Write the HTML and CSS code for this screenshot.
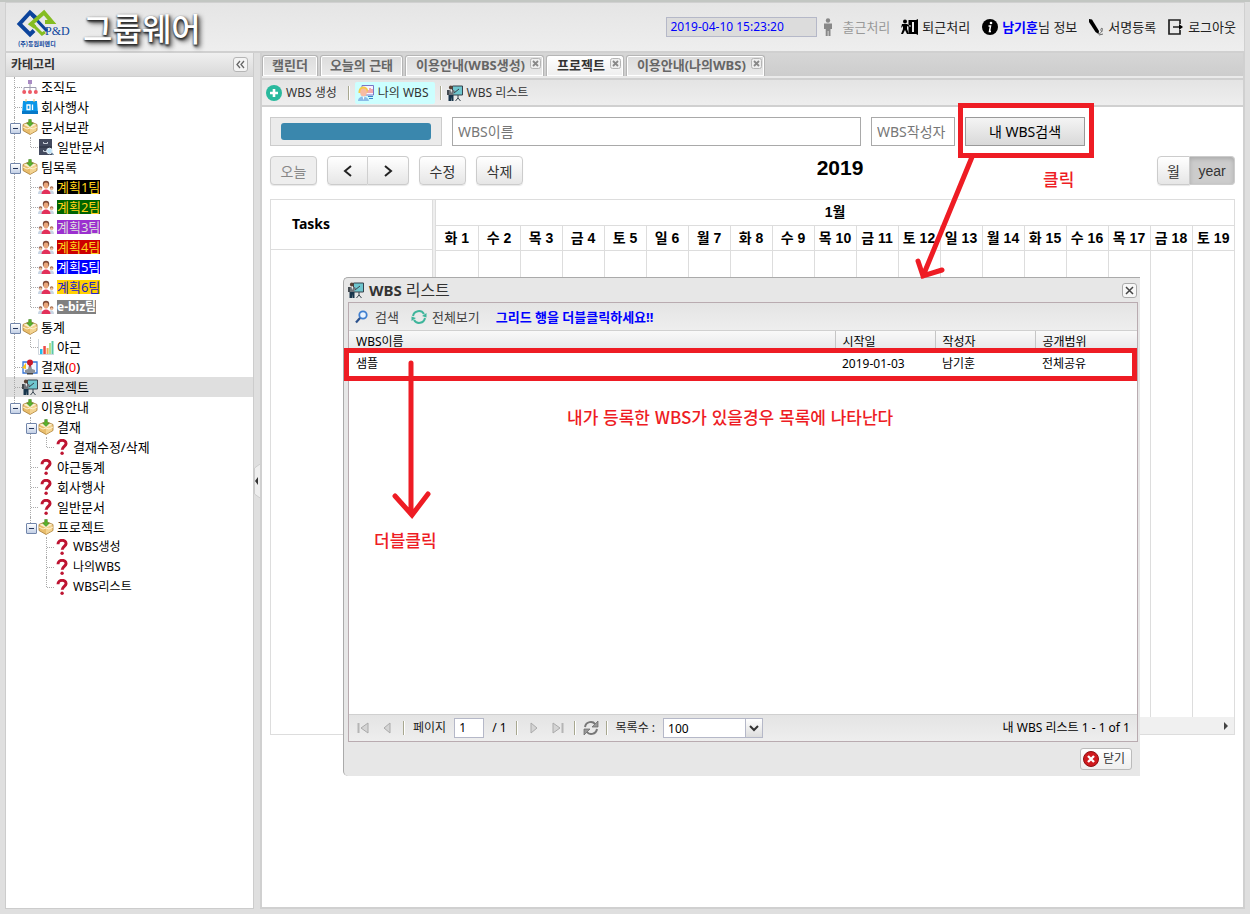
FILE: index.html
```html
<!DOCTYPE html>
<html lang="ko">
<head>
<meta charset="utf-8">
<title>그룹웨어</title>
<link rel="stylesheet" href="styles.css">
</head>
<body>
<svg class="defs" aria-hidden="true">
  <symbol id="box" viewBox="0 0 16 16"><path d="M1 5.500l7-3 7 3V11.500L8 15.500l-7-4z" fill="#e9bd6c" stroke="#a87c34" stroke-width=".8"/><path d="M1.500 5.700L8 9l6.500-3.300L8 3z" fill="#fbeecb"/><path d="M8 9v6l6.300-3.600V6z" fill="#f3d391"/><path d="M1 8l4 2 3-1 3 1 4-2" stroke="#fff3cf" fill="none"/><path d="M8 7.500L4.500 4H6.700V.5h2.600V4h2.200z" fill="#58b32c" stroke="#3a7d1a" stroke-width=".5"/></symbol>
  <symbol id="people" viewBox="0 0 16 16"><circle cx="2.500" cy="9" r="1.800" fill="#8a5a4d"/><circle cx="2.500" cy="9.800" r="1.300" fill="#f2c19c"/><circle cx="13.600" cy="9" r="1.800" fill="#a46a4a"/><circle cx="13.600" cy="9.800" r="1.300" fill="#f2c19c"/><path d="M0 15c0-5 5-5 5.500 0zM10.500 15c0-5 5.500-5 5.500 0z" fill="#c9d6e4"/><path d="M3.500 15c0-6 9-6 9 0z" fill="#e2315a"/><circle cx="8" cy="5" r="3.200" fill="#7d4a37"/><ellipse cx="8" cy="6.500" rx="2.400" ry="3.100" fill="#e9a77c"/></symbol>
  <symbol id="ques" viewBox="0 0 16 16"><path d="M4 5.200C4 0 12.300 .2 12 4.800c-.2 2.500-3.800 2.700-3.800 6" fill="none" stroke="#be1431" stroke-width="3"/><circle cx="8.100" cy="14.200" r="1.700" fill="#be1431"/></symbol>
  <symbol id="org" viewBox="0 0 16 16"><path d="M8 3v9M2 12V8.500h12V12" fill="none" stroke="#9d9bb0"/><path d="M6 1h4v4H6z" fill="#a98bc4"/><circle cx="2.200" cy="13" r="2" fill="#ee5b67"/><circle cx="8" cy="13" r="2" fill="#ee5b67"/><circle cx="13.800" cy="13" r="2" fill="#ee5b67"/></symbol>
  <symbol id="day" viewBox="0 0 16 16"><path d="M1 2h14l1 13H0z" fill="#0a96e8"/><path d="M0 12h16v3H0z" fill="#0779c8"/><path d="M4 0v3M12 0v3" stroke="#e8c36b"/><path d="M5 6h3v4.500H5zM10.500 5.500v5.500" fill="none" stroke="#fff" stroke-width="1.300"/></symbol>
  <symbol id="cabinet" viewBox="0 0 16 16"><path d="M1 0h13v16H1z" fill="#434a5e"/><path d="M1 8h13" stroke="#262c3d"/><path d="M5.500 3v1.500h4V3M5.500 11v1.500h4V11" stroke="#c8ced8" fill="none"/><circle cx="11.500" cy="12" r="2.800" fill="#bfe2f7" stroke="#e8f2f8"/><path d="M13.500 14l2 2" stroke="#6b86a0" stroke-width="1.500"/></symbol>
  <symbol id="chart" viewBox="0 0 16 16"><path d="M.5 0v15.500H16" fill="none" stroke="#cfd5dc"/><path d="M2 10h2.500v5H2z" fill="#20bdec"/><path d="M5.300 7h2.500v8H5.300z" fill="#ed4a45"/><path d="M8.600 9h2v6h-2z" fill="#efad55"/><path d="M11 4h2v11h-2z" fill="#b7df8b"/><path d="M13.500 2H15.500v13h-2z" fill="#5bc8a8"/></symbol>
  <symbol id="stamp" viewBox="0 0 16 16"><path d="M1 3h14v11H1z" fill="#f3f7ff" stroke="#3674d6" stroke-width="1.300"/><path d="M0 9l4-5v6z" fill="#fbc31c"/><path d="M7 6h2l1 4 3 1v3H3v-3l3-1z" fill="#8d9299"/><circle cx="8" cy="3.500" r="3" fill="#c91a2b"/><path d="M7 6h2l-1 3z" fill="#c91a2b"/><path d="M5 14h6v1.500H5z" fill="#444"/></symbol>
  <symbol id="board" viewBox="0 0 16 16"><path d="M5.500 1h10v9h-10z" fill="#6fc6ce" stroke="#35424c"/><path d="M7 8l5-4M11 10v3l-2.500 3M11 13l2.500 3" stroke="#35424c" fill="none"/><circle cx="3.800" cy="2.500" r="1.900" fill="#5a4336"/><path d="M1 5h6l1 2-1.500.5V10H1z" fill="#6e7379"/><path d="M0 5h2v5H0z" fill="#444a50"/><path d="M1.500 10h5v6H4.500v-4l-.5 4H1.500z" fill="#18364c"/><path d="M3.500 5l.8 3 .7-3z" fill="#fff"/></symbol>
  <symbol id="mywbs" viewBox="0 0 16 16"><path d="M4 .5h11.500V10H4z" fill="#f5f4ff" stroke="#7a76c7"/><path d="M10 8V5M12 8V3M14 8V4" stroke="#ec5d5d"/><path d="M.5 8C0 0 9 0 10 5l-1 3z" fill="#f4ca47"/><ellipse cx="5.500" cy="7.500" rx="3.300" ry="4" fill="#f7bba3"/><path d="M0 16c0-6 10-6 11 0z" fill="#8bbce8"/><path d="M4.500 11.500h2L5.500 15z" fill="#fff"/><path d="M10 11.500h5M11 13.500h4" stroke="#3b85ca"/></symbol>
  <symbol id="plus" viewBox="0 0 16 16"><circle cx="8" cy="8" r="8" fill="#29b99d"/><path d="M8 4v8M4 8h8" stroke="#fff" stroke-width="2.600"/></symbol>
  <symbol id="tabx" viewBox="0 0 11 11"><rect x=".5" y=".5" width="10" height="10" rx="2" fill="#eee" stroke="#b5b5b5"/><path d="M3 3l5 5M8 3L3 8" stroke="#888" stroke-width="1.800"/></symbol>
  <symbol id="toolx" viewBox="0 0 15 15"><rect x=".5" y=".5" width="14" height="14" rx="2.500" fill="#f7f7f7" stroke="#aaa"/><path d="M4 4l7 7M11 4l-7 7" stroke="#444" stroke-width="1.500"/></symbol>
</svg>
<div class="page">
  <header class="top">
    <div class="brand">
      <svg class="logo" viewBox="0 0 54 38" role="img" aria-label="P&amp;D">
        <path d="M21 10l-6-5.500L4.500 16 15 26.500l4-4" fill="none" stroke="#0c449c" stroke-width="4"/>
        <path d="M17 7l15 16" fill="none" stroke="#0c449c" stroke-width="3"/>
        <path d="M20 19l-4-3L29 4.500 37 14h-7" fill="none" stroke="#85bd22" stroke-width="4"/>
        <path d="M16.500 15.500L27 26l3-2" fill="none" stroke="#85bd22" stroke-width="3"/>
        <path d="M30 12h7l4 4H30z" fill="#85bd22"/>
        <text x="30" y="27" class="logo-pd">P&amp;D</text>
        <text x="3" y="38" class="logo-co">(주)동원피앤디</text>
      </svg>
      <span class="wordmark">그룹웨어</span>
    </div>
    <nav class="user">
      <input class="clock" aria-label="현재 시각" value="2019-04-10 15:23:20" readonly>
      <button class="ub off" disabled><svg width="16" height="18" viewBox="0 0 16 18"><circle cx="5" cy="2.500" r="2.200" fill="#888"/><path d="M1 5.500h8V11H7.500v7h-2v-5h-.8v5h-2v-7H1z" fill="#888"/></svg>출근처리</button>
      <button class="ub"><svg width="18" height="18" viewBox="0 0 18 18"><path d="M7.500 2h9v14h-9V9h2V7h-2z"/><path d="M11 4h3v10h-3z" fill="#eee"/><path d="M13 3l4-2v16l-4-2z"/><circle cx="4" cy="3.500" r="2"/><path d="M1 6h5l3 2-1 1-2-1v3l2 5H6l-2-4-2 4H0l2-5V8L0 10z"/></svg>퇴근처리</button>
      <button class="ub"><svg width="18" height="18" viewBox="0 0 18 18"><circle cx="9" cy="9" r="8"/><circle cx="10" cy="5" r="1.300" fill="#fff"/><path d="M7.500 8h2l-1 5.500h1.500" stroke="#fff" stroke-width="1.500" fill="none"/></svg><span><b>남기훈</b>님 정보</span></button>
      <button class="ub"><svg width="17" height="18" viewBox="0 0 17 18"><path d="M1 1l3 .5L11 13l-.5 3-3-2L1 4z"/><path d="M10 16c4-1 5-4 4-6-2 1-1 3 0 4M11 17l4-1" stroke="#666" fill="none"/></svg>서명등록</button>
      <button class="ub"><svg width="18" height="18" viewBox="0 0 18 18"><path d="M13 6V2H2v14h11v-4M6 9h9" fill="none" stroke="#222" stroke-width="1.700"/><path d="M12 6l4 3-4 3z"/></svg>로그아웃</button>
    </nav>
  </header>

  <div class="cols">
    <aside class="side">
      <div class="side-head"><h2>카테고리</h2><button class="collapse" aria-label="접기"><svg width="13" height="13" viewBox="1 1 13 13"><path d="M7 4L4 7.500 7 11M11 4L8 7.500 11 11" fill="none" stroke="#666" stroke-width="1.300"/></svg></button></div>
      <ul class="tree">
        <li><i class="g tee"></i><svg><use href="#org"/></svg><a href="#">조직도</a></li>
        <li><i class="g tee"></i><svg><use href="#day"/></svg><a href="#">회사행사</a></li>
        <li><i class="g tee open"></i><svg><use href="#box"/></svg><a href="#">문서보관</a></li>
        <li><i class="g line"></i><i class="g end"></i><svg><use href="#cabinet"/></svg><a href="#">일반문서</a></li>
        <li><i class="g tee open"></i><svg><use href="#box"/></svg><a href="#">팀목록</a></li>
        <li><i class="g line"></i><i class="g tee"></i><svg><use href="#people"/></svg><a href="#" class="team t1">계획1팀</a></li>
        <li><i class="g line"></i><i class="g tee"></i><svg><use href="#people"/></svg><a href="#" class="team t2">계획2팀</a></li>
        <li><i class="g line"></i><i class="g tee"></i><svg><use href="#people"/></svg><a href="#" class="team t3">계획3팀</a></li>
        <li><i class="g line"></i><i class="g tee"></i><svg><use href="#people"/></svg><a href="#" class="team t4">계획4팀</a></li>
        <li><i class="g line"></i><i class="g tee"></i><svg><use href="#people"/></svg><a href="#" class="team t5">계획5팀</a></li>
        <li><i class="g line"></i><i class="g tee"></i><svg><use href="#people"/></svg><a href="#" class="team t6">계획6팀</a></li>
        <li><i class="g line"></i><i class="g end"></i><svg><use href="#people"/></svg><a href="#" class="team t7">e-biz팀</a></li>
        <li><i class="g tee open"></i><svg><use href="#box"/></svg><a href="#">통계</a></li>
        <li><i class="g line"></i><i class="g end"></i><svg><use href="#chart"/></svg><a href="#">야근</a></li>
        <li><i class="g tee"></i><svg><use href="#stamp"/></svg><a href="#">결재(<span class="red">0</span>)</a></li>
        <li class="sel"><i class="g tee"></i><svg><use href="#board"/></svg><a href="#">프로젝트</a></li>
        <li><i class="g end open"></i><svg><use href="#box"/></svg><a href="#">이용안내</a></li>
        <li><i class="g"></i><i class="g tee open"></i><svg><use href="#box"/></svg><a href="#">결재</a></li>
        <li><i class="g"></i><i class="g line"></i><i class="g end"></i><svg><use href="#ques"/></svg><a href="#">결재수정/삭제</a></li>
        <li><i class="g"></i><i class="g tee"></i><svg><use href="#ques"/></svg><a href="#">야근통계</a></li>
        <li><i class="g"></i><i class="g tee"></i><svg><use href="#ques"/></svg><a href="#">회사행사</a></li>
        <li><i class="g"></i><i class="g tee"></i><svg><use href="#ques"/></svg><a href="#">일반문서</a></li>
        <li><i class="g"></i><i class="g end open"></i><svg><use href="#box"/></svg><a href="#">프로젝트</a></li>
        <li><i class="g"></i><i class="g"></i><i class="g tee"></i><svg><use href="#ques"/></svg><a href="#" class="lat">WBS생성</a></li>
        <li><i class="g"></i><i class="g"></i><i class="g tee"></i><svg><use href="#ques"/></svg><a href="#" class="lat">나의WBS</a></li>
        <li><i class="g"></i><i class="g"></i><i class="g end"></i><svg><use href="#ques"/></svg><a href="#" class="lat">WBS리스트</a></li>
      </ul>
    </aside>

    <div class="split"><svg width="6" height="34" viewBox="0 0 6 34"><path d="M6 0L.5 4v26L6 34" fill="#eee" stroke="#ccc"/><path d="M4 13v8l-3-4z" fill="#333"/></svg></div>

    <main class="main">
      <div class="tabs" role="tablist">
        <button class="tab" role="tab">캘린더</button>
        <button class="tab" role="tab">오늘의 근태</button>
        <button class="tab has-x" role="tab">이용안내(WBS생성)<svg><use href="#tabx"/></svg></button>
        <button class="tab has-x on" role="tab">프로젝트<svg><use href="#tabx"/></svg></button>
        <button class="tab has-x" role="tab">이용안내(나의WBS)<svg><use href="#tabx"/></svg></button>
      </div>
      <div class="bar">
        <button class="tb"><svg><use href="#plus"/></svg>WBS 생성</button><i class="sep"></i>
        <button class="tb hot"><svg><use href="#mywbs"/></svg>나의 WBS</button><i class="sep"></i>
        <button class="tb"><svg><use href="#board"/></svg>WBS 리스트</button>
      </div>
      <div class="body">
        <form class="search">
          <div class="prog"><div class="fill"></div></div>
          <input class="field" placeholder="WBS이름" aria-label="WBS이름">
          <input class="field" placeholder="WBS작성자" aria-label="WBS작성자">
          <button type="button" class="find">내 WBS검색</button>
        </form>
        <div class="cal-bar">
          <div class="left">
            <button class="fc" disabled>오늘</button>
            <div class="grp">
              <button class="fc" aria-label="이전"><svg width="10" height="12" viewBox="0 0 10 12"><path d="M8 1L2 6l6 5" fill="none" stroke="#222" stroke-width="2"/></svg></button>
              <button class="fc" aria-label="다음"><svg width="10" height="12" viewBox="0 0 10 12"><path d="M2 1l6 5-6 5" fill="none" stroke="#222" stroke-width="2"/></svg></button>
            </div>
            <button class="fc">수정</button>
            <button class="fc">삭제</button>
          </div>
          <h1>2019</h1>
          <div class="grp view"><button class="fc">월</button><button class="fc down">year</button></div>
        </div>
        <div class="cal">
          <div class="tasks"><div class="tasks-head">Tasks</div></div>
          <div class="gut"></div>
          <div class="time">
            <table>
              <thead>
                <tr><th colspan="19">1월</th></tr>
                <tr><th>화 1</th><th>수 2</th><th>목 3</th><th>금 4</th><th>토 5</th><th>일 6</th><th>월 7</th><th>화 8</th><th>수 9</th><th>목 10</th><th>금 11</th><th>토 12</th><th>일 13</th><th>월 14</th><th>화 15</th><th>수 16</th><th>목 17</th><th>금 18</th><th>토 19</th></tr>
              </thead>
              <tbody><tr class="slots"><td></td><td></td><td></td><td></td><td></td><td></td><td></td><td></td><td></td><td></td><td></td><td></td><td></td><td></td><td></td><td></td><td></td><td></td><td></td></tr></tbody>
            </table>
            <div class="hscroll"><svg width="6" height="8" viewBox="0 0 6 8"><path d="M1 0l4 4-4 4z" fill="#444"/></svg></div>
          </div>
        </div>
      </div>
    </main>
  </div>

  <section class="win" role="dialog" aria-labelledby="wt">
    <div class="win-head"><svg class="ic"><use href="#board"/></svg><h2 id="wt">WBS <span>리스트</span></h2><button class="wx" aria-label="창 닫기"><svg><use href="#toolx"/></svg></button></div>
    <div class="win-in">
      <div class="wbar">
        <button><svg class="ic" viewBox="0 0 16 16"><circle cx="9" cy="6" r="3.700" fill="#eaf4ff" stroke="#3f7fd0" stroke-width="1.800"/><path d="M6 9l-4 4.500" stroke="#2b518c" stroke-width="2.200"/></svg>검색</button>
        <button><svg class="ic" viewBox="0 0 16 16"><path d="M2 7a6 6 0 0111-2M14 9a6 6 0 01-11 2" fill="none" stroke="#3eb59b" stroke-width="2"/><path d="M15.500 4v4.500L11 7zM.5 12V7.500L5 9z" fill="#3eb59b"/></svg>전체보기</button>
        <b>그리드 행을 더블클릭하세요!!</b>
      </div>
      <table class="grid">
        <colgroup><col><col class="c"><col class="c"><col class="last"></colgroup>
        <thead><tr><th>WBS이름</th><th>시작일</th><th>작성자</th><th>공개범위</th></tr></thead>
        <tbody><tr><td>샘플</td><td>2019-01-03</td><td>남기훈</td><td>전체공유</td></tr></tbody>
      </table>
      <div class="empty"></div>
      <div class="pager">
        <button aria-label="처음" disabled><svg viewBox="0 0 12 12"><path d="M1.500 1v10" stroke="#b5b5b5" stroke-width="2"/><path d="M11 1v10L4 6z" fill="#d4d4d4" stroke="#aaa"/></svg></button>
        <button aria-label="이전" disabled><svg viewBox="0 0 12 12"><path d="M9 1v10L3 6z" fill="#d4d4d4" stroke="#aaa"/></svg></button>
        <i class="sep"></i>
        <label for="pg">페이지</label><input id="pg" value="1"><span>/ 1</span>
        <i class="sep"></i>
        <button aria-label="다음" disabled><svg viewBox="0 0 12 12"><path d="M3 1v10l6-5z" fill="#d4d4d4" stroke="#aaa"/></svg></button>
        <button aria-label="마지막" disabled><svg viewBox="0 0 12 12"><path d="M10.500 1v10" stroke="#b5b5b5" stroke-width="2"/><path d="M1 1v10l7-5z" fill="#d4d4d4" stroke="#aaa"/></svg></button>
        <i class="sep"></i>
        <button aria-label="새로고침" class="re"><svg viewBox="0 0 16 16"><path d="M2 7c1-6 8-6 10-3M14 9c-1 6-8 6-10 3" fill="none" stroke="#777" stroke-width="2"/><path d="M15 1v6H9zM1 15V9h6z" fill="#999" stroke="#666" stroke-width=".7"/></svg></button>
        <i class="sep"></i>
        <label for="sz">목록수 :</label>
        <span class="combo"><select id="sz"><option>100</option></select><svg viewBox="0 0 17 18"><path d="M.5 0v18" stroke="#b5b8c8"/><path d="M5 7l4 4 4-4" fill="none" stroke="#333" stroke-width="2"/></svg></span>
        <span class="sum">내 WBS 리스트 1 - 1 of 1</span>
      </div>
    </div>
    <div class="win-foot"><button><svg class="ic" viewBox="0 0 16 16"><circle cx="8" cy="8" r="7.500" fill="#cf1a1e" stroke="#8d0f12"/><path d="M5 5l6 6M11 5l-6 6" stroke="#fff" stroke-width="2.400"/></svg>닫기</button></div>
  </section>

  <svg class="marks" width="1250" height="914" viewBox="0 0 1250 914" fill="none" stroke="#ee1c24" stroke-width="5" stroke-linecap="round" aria-hidden="true">
    <rect x="960.500" y="105.500" width="131" height="50"/>
    <path d="M972 157L923 276M918 261l5 15 19-6"/>
    <rect x="346.500" y="350.500" width="788" height="28"/>
    <path d="M411 363v151M395 496l17 19 16-21"/>
  </svg>
  <p class="note n1">클릭</p>
  <p class="note n2">내가 등록한 WBS가 있을경우 목록에 나타난다</p>
  <p class="note n3">더블클릭</p>
</div>
</body>
</html>
```

FILE: styles.css
```css
* { box-sizing: border-box; }
body {
  margin: 0;
  background: #dfdfdf;
  color: #000;
  font: 13px/20px "Noto Sans", "Noto Sans CJK KR", sans-serif;
}
button, input, select { font: inherit; color: inherit; margin: 0; }
button { padding: 0; border: 0; background: none; white-space: nowrap; }
h1, h2, p, ul { margin: 0; padding: 0; }
svg { flex: none; display: block; }
.defs { position: absolute; width: 0; height: 0; }
.ic { width: 16px; height: 16px; }

.page {
  position: relative;
  display: flex;
  flex-direction: column;
  min-height: 100vh;
  padding: 0 5px 5px;
  border-top: 2px solid #c2c6c2;
}
.top {
  display: flex;
  justify-content: space-between;
  align-items: center;
  height: 51px;
  padding: 0 8px 0 9px;
  border: 1px solid #d0d0d0;
  border-bottom-width: 2px;
  background: linear-gradient(#e5e5e5, #eee);
}
.brand { display: flex; align-items: center; gap: 14px; }
.logo { width: 54px; height: 38px; overflow: visible; }
.logo-pd { font: 12px "Liberation Serif", serif; fill: #0c449c; }
.logo-co { font: bold 6px "Noto Sans CJK KR", sans-serif; fill: #0c449c; }
.wordmark {
  color: #fff;
  font: 500 32px/38px "Noto Sans CJK KR", sans-serif;
  text-shadow: 0 1px 2px #222, 1px 2px 3px #333, 3px 3px 5px #444;
}
.user { display: flex; align-items: center; gap: 11px; color: #222; }
.clock {
  width: 151px;
  height: 20px;
  margin-right: -5px;
  padding: 0 3px;
  border: 1px solid #b5b8c8;
  background: #dcdcdc;
  color: #00f;
  font-size: 12px;
}
.ub { display: flex; align-items: center; gap: 3px; }
.ub b { color: #00f; }
.off { color: #999; }

.cols { display: flex; flex: 1; }
.side { width: 249px; border: 1px solid #ccc; border-top: 0; background: #fff; }
.side-head {
  display: flex;
  justify-content: space-between;
  align-items: center;
  height: 24px;
  padding: 0 5px;
  border-bottom: 1px solid #d0d0d0;
  background: linear-gradient(#f0f0f0, #d9d9d9);
}
.side-head h2 { color: #333; font-size: 12px; }
.collapse { border: 1px solid #b5b5b5; border-radius: 3px; background: #f4f4f4; }
.tree { list-style: none; }
.tree li { display: flex; align-items: center; height: 20px; }
.tree svg { width: 16px; height: 16px; }
.tree a { margin-left: 3px; color: #000; line-height: 14px; text-decoration: none; }
.tree .lat { font-size: 12px; }
.tree .sel { background: #dfdfdf; }
.red { color: #f00; }
.g { position: relative; width: 16px; height: 20px; }
.line::before, .tee::before, .end::before {
  content: "";
  position: absolute;
  left: 8px;
  top: 0;
  height: 20px;
  border-left: 1px dotted #aaa;
}
.end::before { height: 10px; }
.tee::after, .end::after {
  content: "";
  position: absolute;
  left: 9px;
  top: 10px;
  width: 7px;
  border-top: 1px dotted #aaa;
}
.open::after {
  left: 4px;
  top: 6px;
  width: 9px;
  height: 9px;
  border: 1px solid #7286ab;
  border-radius: 1px;
  background: linear-gradient(#26365c, #26365c) center / 5px 1px no-repeat, linear-gradient(#fff, #c3d0e6);
}
.tree .team { height: 14px; }
.tree .t1 { background: #000; color: #ffd21a; }
.tree .t2 { background: #006400; color: #ffd21a; }
.tree .t3 { background: #9b30d0; color: #ddd; }
.tree .t4 { background: #c00; color: #ffd21a; }
.tree .t5 { background: #00f; color: #fff; }
.tree .t6 { background: #ffd000; color: #22c; }
.tree .t7 { background: #808080; color: #fff; font-size: 12px; font-weight: bold; }

.split { display: flex; align-items: center; width: 6px; }
.main {
  display: flex;
  flex: 1;
  flex-direction: column;
  min-width: 0;
  border: 2px solid #d0d0d0;
  border-top: 0;
  background: #fff;
}
.tabs {
  display: flex;
  align-items: flex-end;
  gap: 2px;
  height: 25px;
  border-bottom: 2px solid #eaeaea;
  background: linear-gradient(#d6d6d6, #cdcdcd);
}
.tab {
  display: flex;
  height: 21px;
  padding: 0 9px;
  border: 1px solid #b5b5b5;
  border-bottom: 0;
  border-radius: 3px 3px 0 0;
  box-shadow: inset 0 0 0 1px #fff;
  background: linear-gradient(#dcdcdc, #eaeaea);
  color: #666;
  font-size: 13px;
  font-weight: bold;
  line-height: 18px;
}
.has-x { padding-left: 10px; padding-right: 2px; gap: 5px; }
.tab svg { width: 11px; height: 11px; margin-top: 2px; }
.tab.on { background: linear-gradient(#fff, #eee); color: #333; }
.bar {
  display: flex;
  align-items: center;
  gap: 4px;
  height: 29px;
  padding: 0 4px;
  border-top: 2px solid #d0d0d0;
  border-bottom: 2px solid #d0d0d0;
  background: linear-gradient(#e4e4e4, #eee);
}
.tb { display: flex; align-items: center; gap: 4px; padding: 0 6px 0 0; color: #333; font-size: 12px; height: 22px; }
.tb svg { width: 16px; height: 16px; }
.hot { padding: 0 6px 0 3px; border-radius: 2px; background: #cff; }
.sep { flex: none; width: 2px; height: 14px; border-left: 1px solid #a7a78f; border-right: 1px solid #fff; margin: 0 4px; }
.bar .sep { margin: 0 1px; }

.body { padding: 10px 8px; }
.search { display: grid; grid-template-columns: 172px 1fr 84px 120px; gap: 10px; padding-right: 150px; }
.prog { display: flex; align-items: center; height: 29px; padding: 0 10px; border: 1px solid #ccc; background: #ebebeb; }
.fill { flex: 1; height: 17px; border-radius: 3px; background: #3a87ad; }
.field { min-width: 0; height: 29px; padding: 0 5px; border: 1px solid #a9a9a9; background: #fff; font-size: 14px; }
.field::placeholder { color: #777; }
.find { border: 1px solid #999; background: linear-gradient(#f4f4f4, #d9d9d9); font-size: 14px; }
.cal-bar { display: flex; justify-content: space-between; align-items: center; margin: 10px 0 14px; }
.cal-bar h1 { padding-bottom: 5px; font: bold 21px/24px "Liberation Sans", sans-serif; }
.left { display: flex; gap: 10px; }
.grp { display: flex; }
.fc {
  display: flex;
  align-items: center;
  justify-content: center;
  width: 47px;
  height: 29px;
  border: 1px solid #ccc;
  border-radius: 4px;
  background: linear-gradient(#fff, #e6e6e6);
  box-shadow: 0 1px 1px #e8e8e8;
  color: #333;
  font: 14px "Liberation Sans", "Noto Sans CJK KR", sans-serif;
}
.fc:disabled { background: #eee; color: #888; }
.grp .fc { width: 41px; }
.grp .fc:first-child { border-radius: 4px 0 0 4px; }
.grp .fc:last-child { border-left: 0; border-radius: 0 4px 4px 0; }
.view .fc:first-child { width: 33px; }
.view .fc:last-child { width: 45px; }
.grp .down { background: #ccc; box-shadow: inset 0 2px 4px #aaa; }
.cal { display: flex; border: 1px solid #ddd; font: bold 14px "Liberation Sans", "Noto Sans CJK KR", sans-serif; }
.tasks { width: 161px; }
.tasks-head { height: 50px; padding: 0 21px; border-bottom: 1px solid #ddd; line-height: 48px; font-family: "Noto Sans", sans-serif; }
.gut { width: 4px; border: 1px solid #ddd; border-width: 0 1px; background: #eee; }
.time { flex: 1; min-width: 0; }
.time table { width: 100%; border-collapse: collapse; table-layout: fixed; }
.time th { height: 25px; padding: 0; border-bottom: 1px solid #ddd; white-space: nowrap; line-height: 24px; }
.time tr + tr th + th, .slots td + td { border-left: 1px solid #ddd; }
.slots td { height: 467px; }
.hscroll { display: flex; align-items: center; justify-content: flex-end; height: 17px; padding: 0 5px; background: #f0f0f0; }

.win {
  position: absolute;
  left: 343px;
  top: 275px;
  display: flex;
  flex-direction: column;
  width: 797px;
  height: 499px;
  padding: 0 2px 0 4px;
  border: 1px solid #aaa;
  border-width: 1px 0 0 1px;
  border-radius: 5px 0 0 5px;
  background: #e7e7e7;
}
.win-head { display: flex; align-items: center; gap: 5px; height: 24px; padding-right: 1px; }
.win-head h2 { flex: 1; color: #333; font-size: 15px; line-height: 22px; }
.win-head span { font-size: 16px; font-weight: normal; }
.win-head .wx svg { width: 15px; height: 15px; }
.win-in { display: flex; flex: 1; flex-direction: column; border: 1px solid #b9abb0; background: #fff; }
.wbar {
  display: flex;
  align-items: center;
  gap: 12px;
  height: 28px;
  padding: 0 5px;
  border-bottom: 1px solid #d0d0d0;
  background: linear-gradient(#e4e4e4, #eee);
}
.wbar button { display: flex; align-items: center; gap: 5px; color: #444; }
.wbar b { color: #00f; margin-left: 4px; }
.grid { width: 100%; border-collapse: collapse; table-layout: fixed; font-size: 12px; line-height: 20px; }
.grid .c { width: 100px; }
.grid .last { width: 102px; }
.grid th { height: 22px; padding: 0 7px; background: linear-gradient(#f9f9f9, #e3e4e6); font-weight: normal; text-align: left; }
.grid th + th { border-left: 1px solid #c5c5c5; }
.grid td { height: 23px; padding: 0 7px; border-bottom: 1px solid #ededed; }
.empty { flex: 1; }
.pager {
  display: flex;
  align-items: center;
  height: 27px;
  padding: 0 7px 0 2px;
  border-top: 1px solid #d0d0d0;
  background: linear-gradient(#e4e4e4, #eee);
  font-size: 12px;
}
.pager button { width: 24px; display: flex; justify-content: center; }
.pager button svg { width: 12px; height: 12px; }
.pager .re svg { width: 16px; height: 16px; }
.pager .re { width: 22px; }
.pager label { margin: 0 8px 0 4px; color: #222; }
.pager input { width: 30px; height: 20px; margin-right: 8px; padding: 0 4px; border: 1px solid #b5b8c8; background: #fff; }
.pager input + span { margin-right: 5px; }
.combo { position: relative; }
.combo select { display: block; appearance: none; width: 100px; height: 20px; padding: 0 4px; border: 1px solid #b5b8c8; border-radius: 0; background: #fff; }
.combo svg { position: absolute; top: 1px; right: 1px; width: 17px; height: 18px; background: linear-gradient(#fff, #ddd); pointer-events: none; }
.sum { margin-left: auto; }
.win-foot { display: flex; justify-content: flex-end; height: 34px; padding: 6px 6px 0 0; }
.win-foot button {
  display: flex;
  align-items: center;
  gap: 4px;
  height: 22px;
  padding: 0 6px 0 2px;
  border: 1px solid #bbb;
  border-radius: 3px;
  background: linear-gradient(#fff, #eee);
  color: #333;
  font-size: 12px;
}
.marks { position: absolute; left: 0; top: -2px; pointer-events: none; }
.note { position: absolute; color: #ee1c24; font: 500 17px/24px "Noto Sans CJK KR", sans-serif; white-space: nowrap; }
.n1 { left: 1043px; top: 165px; }
.n2 { left: 567px; top: 403px; }
.n3 { left: 374px; top: 526px; }
```
